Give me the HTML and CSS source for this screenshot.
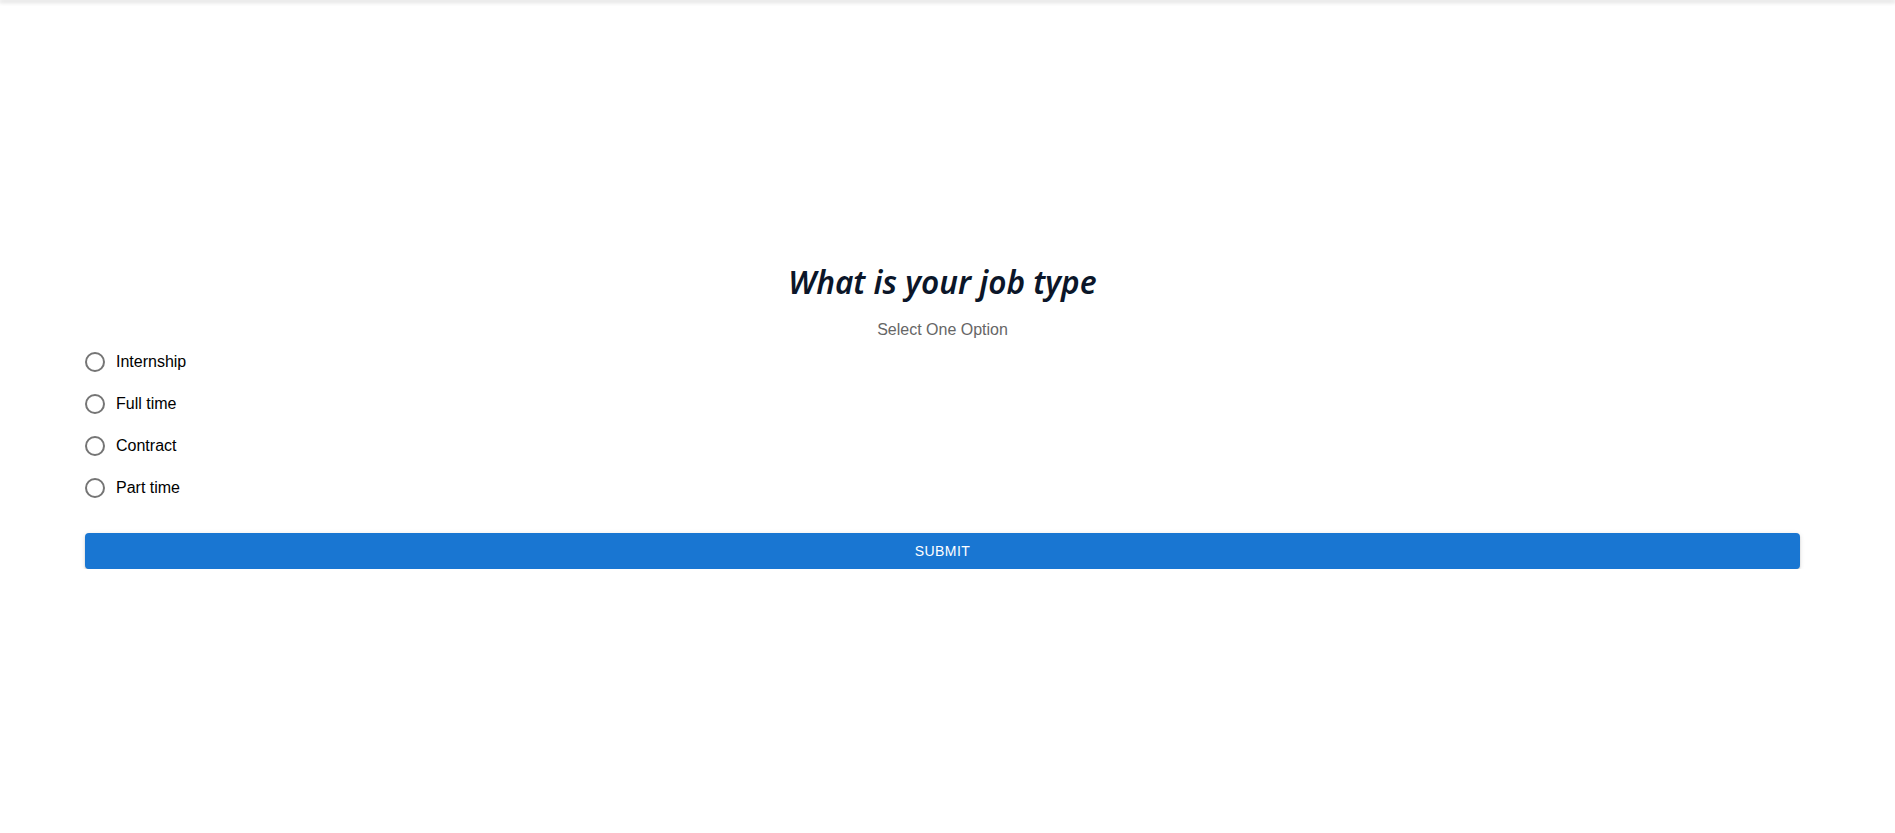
FILE: index.html
```html
<!DOCTYPE html>
<html lang="en">
<head>
<meta charset="utf-8">
<title>Job type</title>
<link rel="stylesheet" href="styles.css">
</head>
<body>
<div class="topbar"></div>
<main class="container">
  <h1 class="title">What is your job type</h1>
  <p class="subtitle">Select One Option</p>
  <div class="radio-group">
    <label class="option"><span class="radio"><span class="circle"></span></span><span class="label">Internship</span></label>
    <label class="option"><span class="radio"><span class="circle"></span></span><span class="label">Full time</span></label>
    <label class="option"><span class="radio"><span class="circle"></span></span><span class="label">Contract</span></label>
    <label class="option"><span class="radio"><span class="circle"></span></span><span class="label">Part time</span></label>
  </div>
  <button class="submit" type="button">SUBMIT</button>
</main>
</body>
</html>
```
FILE: styles.css
```css
html, body {
  margin: 0;
  padding: 0;
  background: #ffffff;
}
body {
  font-family: "Liberation Sans", Arial, sans-serif;
  font-size: 16px;
  color: #000000;
}
.topbar {
  height: 0;
  box-shadow: 0 1px 4px 1px rgba(0, 0, 0, 0.22);
}
.container {
  margin: 0 95px 0 85px;
  padding-top: 263px;
  display: flex;
  flex-direction: column;
}
.title {
  margin: 0;
  text-align: center;
  font-family: "Noto Sans", "Open Sans", sans-serif;
  font-style: italic;
  font-weight: 600;
  font-size: 31.6px;
  line-height: 38px;
  color: #0b1629;
}
.subtitle {
  margin: 17px 0 0;
  text-align: center;
  font-size: 16px;
  line-height: 24px;
  color: #666666;
}
.radio-group {
  display: flex;
  flex-direction: column;
  margin: -1px 0 0 -11px;
}
.option {
  display: flex;
  align-items: center;
  height: 42px;
  cursor: pointer;
}
.radio {
  width: 42px;
  height: 42px;
  display: flex;
  align-items: center;
  justify-content: center;
}
.circle {
  width: 16px;
  height: 16px;
  border: 2px solid #757575;
  border-radius: 50%;
}
.label {
  font-size: 16px;
  line-height: 24px;
  color: #000000;
}
.submit {
  margin-top: 24px;
  height: 36px;
  width: 100%;
  border: 0;
  border-radius: 4px;
  background: #1976d2;
  color: #ffffff;
  font-family: "Liberation Sans", Arial, sans-serif;
  font-size: 14px;
  font-weight: 400;
  letter-spacing: 0.4px;
  box-shadow: 0 3px 1px -2px rgba(0,0,0,0.2), 0 2px 2px 0 rgba(0,0,0,0.14), 0 1px 5px 0 rgba(0,0,0,0.12);
  cursor: pointer;
}
```
